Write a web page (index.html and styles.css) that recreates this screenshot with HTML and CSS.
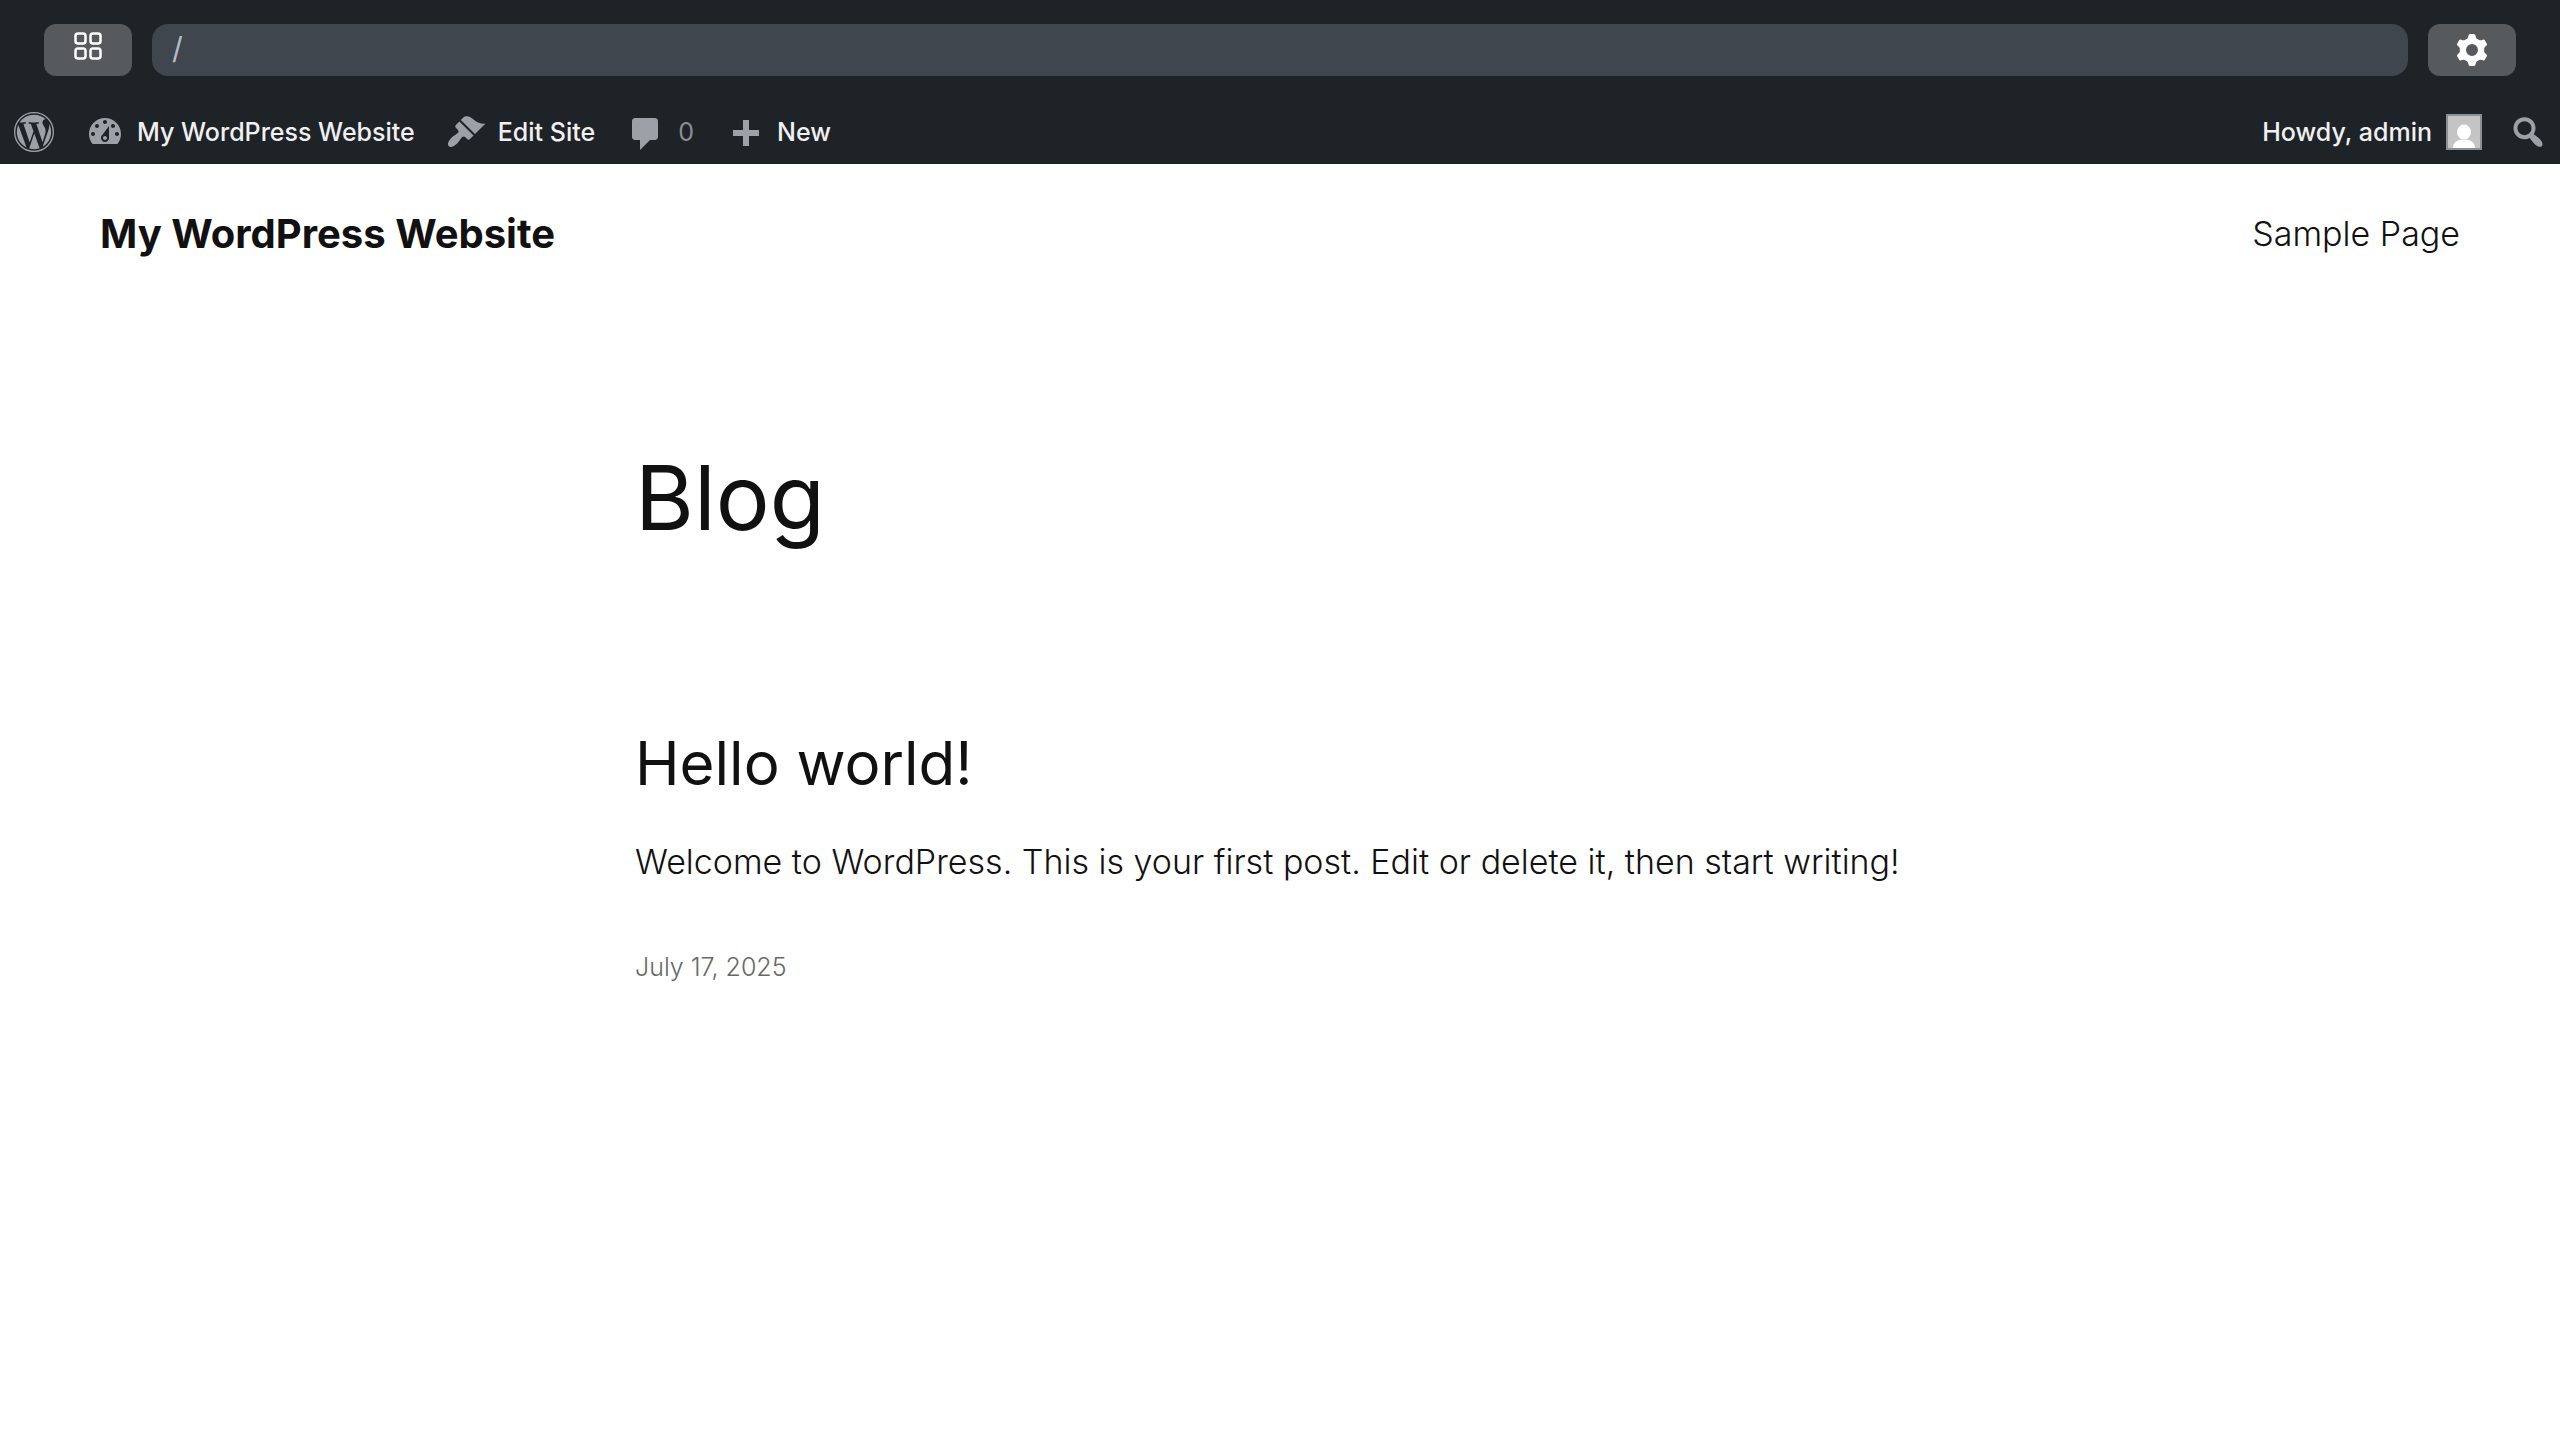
FILE: index.html
```html
<!DOCTYPE html>
<html lang="en">
<head>
<meta charset="utf-8">
<title>My WordPress Website</title>
<link rel="stylesheet" href="styles.css">
</head>
<body>
<div class="toolbar">
  <button class="tool-button tool-button-grid" type="button" aria-label="Site manager">
    <svg class="grid-icon" viewBox="0 0 28 28" aria-hidden="true"><rect x="1.5" y="1.5" width="10" height="10" rx="2.5"/><rect x="16.5" y="1.5" width="10" height="10" rx="2.5"/><rect x="1.5" y="16.5" width="10" height="10" rx="2.5"/><rect x="16.5" y="16.5" width="10" height="10" rx="2.5"/></svg>
  </button>
  <input class="address" type="text" value="/" aria-label="Page path">
  <button class="tool-button" type="button" aria-label="Settings">
    <svg class="gear-icon" viewBox="-16 -16 32 32" aria-hidden="true"><defs><path id="tooth" d="M-7 -10C-4.500 -11 -3.800 -12 -3.500 -14.500Q-3.200 -16 -1.800 -16H1.800Q3.200 -16 3.500 -14.500C3.800 -12 4.500 -11 7 -10L0 -7Z"/></defs><circle r="9" fill="none" stroke="currentColor" stroke-width="6"/><use href="#tooth"/><use href="#tooth" transform="rotate(60)"/><use href="#tooth" transform="rotate(120)"/><use href="#tooth" transform="rotate(180)"/><use href="#tooth" transform="rotate(240)"/><use href="#tooth" transform="rotate(300)"/></svg>
  </button>
</div>
<nav class="adminbar" aria-label="Admin">
  <div class="group">
    <a class="item" href="#" aria-label="About WordPress"><svg class="icon" viewBox="0 0 24 24" aria-hidden="true"><circle cx="12" cy="12" r="11.600" fill="none" stroke="currentColor" stroke-width=".8"/><path transform="translate(12 12) scale(.954) translate(-12 -12)" d="M21.469 6.825c.84 1.537 1.318 3.3 1.318 5.175 0 3.979-2.156 7.456-5.363 9.325l3.295-9.527c.615-1.54.82-2.771.82-3.864 0-.405-.026-.78-.07-1.109m-7.981.105c.647-.03 1.232-.105 1.232-.105.582-.075.514-.93-.067-.899 0 0-1.755.135-2.88.135-1.064 0-2.85-.15-2.85-.15-.585-.03-.661.855-.075.885 0 0 .54.061 1.125.09l1.68 4.605-2.37 7.08L5.354 6.9c.649-.03 1.234-.1 1.234-.1.585-.075.516-.93-.065-.896 0 0-1.746.138-2.874.138-.2 0-.438-.008-.69-.015C4.911 3.15 8.235 1.215 12 1.215c2.809 0 5.365 1.072 7.286 2.833-.046-.003-.091-.009-.141-.009-1.06 0-1.812.923-1.812 1.914 0 .89.513 1.643 1.06 2.531.411.72.89 1.643.89 2.977 0 .915-.354 1.994-.821 3.479l-1.075 3.585-3.9-11.61zM12 22.784c-1.059 0-2.081-.153-3.048-.437l3.237-9.406 3.315 9.087c.024.053.05.101.078.149-1.12.393-2.325.607-3.582.607M1.211 12c0-1.564.336-3.05.935-4.39L7.29 21.709C3.694 19.96 1.211 16.271 1.211 12"/></svg></a>
    <a class="item" href="#"><svg class="icon" viewBox="0 0 20 20" aria-hidden="true"><path fill-rule="evenodd" d="M3.760 16h12.480c1.100-1.370 1.760-3.110 1.760-5 0-4.420-3.580-8-8-8s-8 3.580-8 8c0 1.890.66 3.630 1.760 5zM10 4c.55 0 1 .45 1 1s-.45 1-1 1-1-.45-1-1 .45-1 1-1zM6 6c.55 0 1 .45 1 1s-.45 1-1 1-1-.45-1-1 .45-1 1-1zm8 0c.55 0 1 .45 1 1s-.45 1-1 1-1-.45-1-1 .45-1 1-1zm-5.370 5.550L12 7v6c0 1.100-.9 2-2 2s-2-.9-2-2c0-.57.24-1.080.63-1.450zM4 10c.55 0 1 .45 1 1s-.45 1-1 1-1-.45-1-1 .45-1 1-1zm12 0c.55 0 1 .45 1 1s-.45 1-1 1-1-.45-1-1 .45-1 1-1zm-5 3c0-.55-.45-1-1-1s-1 .45-1 1 .45 1 1 1 1-.45 1-1z"/></svg><span>My WordPress Website</span></a>
    <a class="item" href="#"><svg class="icon" viewBox="0 0 20 20" aria-hidden="true"><path d="M14.480 11.060L7.410 3.990l1.500-1.500c.5-.56 2.300-.47 3.510.32 1.210.8 1.430 1.280 2.910 2.100 1.180.64 2.450 1.260 4.450.85zm-.71.71L6.700 4.700 4.930 6.470c-.39.39-.39 1.020 0 1.410l1.060 1.060c.39.39.39 1.030 0 1.420-.6.6-1.430 1.110-2.210 1.690-.35.26-.7.53-1.010.84C1.430 14.230.4 16.080 1.400 17.070c.99 1 2.840-.03 4.180-1.360.31-.31.58-.66.85-1.020.57-.78 1.080-1.610 1.690-2.210.39-.39 1.020-.39 1.410 0l1.060 1.060c.39.39 1.020.39 1.410 0z"/></svg><span>Edit Site</span></a>
    <a class="item item-comments" href="#" aria-label="0 comments"><svg class="icon" viewBox="0 -1 20 20" aria-hidden="true"><path d="M4.500 2h10c.8 0 1.500.7 1.500 1.500v8c0 .8-.7 1.500-1.500 1.500H12l-5 5v-5H4.500c-.8 0-1.500-.7-1.500-1.500v-8C3 2.700 3.700 2 4.500 2z"/></svg><span>0</span></a>
    <a class="item" href="#"><svg class="icon" viewBox="0 -2 20 20" aria-hidden="true"><path d="M17 7v3h-5v5H9v-5H4V7h5V2h3v5h5z"/></svg><span>New</span></a>
  </div>
  <div class="group group-right">
    <a class="item item-account" href="#"><span>Howdy, admin</span><svg class="avatar" viewBox="0 0 32 32" aria-hidden="true"><ellipse cx="16" cy="16" rx="7" ry="7.500"/><path d="M5 32c0-6 4-7.500 8-8.500h6c4 1 8 2.500 8 8.500z"/></svg></a>
    <a class="item" href="#" aria-label="Search"><svg class="icon" viewBox="0 0 20 20" aria-hidden="true"><path d="M12.140 4.180c1.870 1.870 2.110 4.750.72 6.890.12.1.22.21.36.31.2.16.47.36.81.59.34.24.56.39.66.47.42.31.73.57.94.78.32.32.6.65.84 1 .25.35.44.69.59 1.040.14.35.21.68.18 1-.02.32-.14.59-.36.81s-.49.34-.81.36c-.31.02-.65-.04-.99-.19-.35-.14-.7-.34-1.040-.59-.35-.24-.68-.52-1-.84-.21-.21-.47-.52-.77-.93-.1-.13-.25-.35-.47-.66-.22-.32-.4-.57-.56-.78-.16-.2-.29-.35-.44-.5-2.070 1.090-4.690.76-6.440-.98-2.140-2.150-2.140-5.640 0-7.780 2.150-2.150 5.630-2.150 7.780 0zm-1.410 6.360c1.360-1.370 1.360-3.580 0-4.950-1.370-1.370-3.590-1.370-4.950 0-1.370 1.370-1.370 3.580 0 4.950 1.360 1.370 3.580 1.370 4.950 0z"/></svg></a>
  </div>
</nav>
<header class="site-header">
  <a class="site-title" href="#">My WordPress Website</a>
  <nav class="pages" aria-label="Pages"><a class="page-link" href="#">Sample Page</a></nav>
</header>
<main class="content">
  <h1 class="page-heading">Blog</h1>
  <article class="post">
    <h2 class="post-title"><a href="#">Hello world!</a></h2>
    <p class="post-text">Welcome to WordPress. This is your first post. Edit or delete it, then start writing!</p>
    <a class="post-date" href="#"><time datetime="2025-07-17">July 17, 2025</time></a>
  </article>
</main>
</body>
</html>
```
FILE: styles.css
```css
* { box-sizing: border-box; }

body {
  margin: 0;
  background: #fff;
  color: #111;
  font-family: Inter, "Liberation Sans", sans-serif;
  font-weight: 300;
}

a { color: inherit; text-decoration: none; }

.toolbar {
  display: flex;
  gap: 20px;
  height: 100px;
  padding: 24px 44px;
  background: #1e2327;
}

.tool-button {
  display: flex;
  align-items: center;
  justify-content: center;
  width: 88px;
  padding: 0;
  border: 0;
  border-radius: 12px;
  background: #565a5c;
  color: #fff;
}

.tool-button-grid { padding-bottom: 8px; }

.grid-icon {
  width: 28px;
  height: 28px;
  fill: none;
  stroke: currentColor;
  stroke-width: 2.5;
}

.gear-icon { width: 32px; height: 32px; fill: currentColor; }

.address {
  flex: 1;
  min-width: 0;
  padding: 0 20px 4px;
  border: 0;
  border-radius: 16px;
  background: #40464d;
  color: #b4bccb;
  font: 400 30px Inter, "Liberation Sans", sans-serif;
}

.adminbar {
  display: flex;
  align-items: center;
  justify-content: space-between;
  height: 64px;
  padding: 0 12px 0 14px;
  background: #1e2327;
  color: #f0f0f1;
  font-size: 25px;
  font-weight: 500;
  line-height: 32px;
}

.group { display: flex; align-items: center; gap: 31px; }
.group-right { gap: 26px; }

.item { display: flex; align-items: center; gap: 12px; }
.item-comments { color: #8c8f92; font-weight: 400; }
.item-account { gap: 14px; }

.icon { width: 40px; height: 40px; fill: currentColor; color: #9ca1a7; }

.avatar {
  width: 36px;
  height: 36px;
  border: 2px solid #8c8f94;
  background: #c4c4c4;
  fill: #fff;
}

.site-header {
  display: flex;
  align-items: center;
  justify-content: space-between;
  padding: 40px 100px;
  line-height: 60px;
}

.pages { display: flex; }
.site-title { font-size: 40px; font-weight: 700; }
.page-link { font-size: 34px; }

.content { max-width: 1290px; margin: 0 auto; }

.page-heading {
  margin: 138px 0 0;
  font-size: 90px;
  font-weight: 400;
  line-height: 112px;
}

.post { margin-top: 171px; }
.post-title { margin: 0; font-size: 60px; font-weight: 400; line-height: 76px; }
.post-text { margin: 35px 0 0; font-size: 34px; line-height: 52px; }
.post-date { display: block; margin-top: 59px; color: #686868; font-size: 25px; line-height: 40px; }
```
